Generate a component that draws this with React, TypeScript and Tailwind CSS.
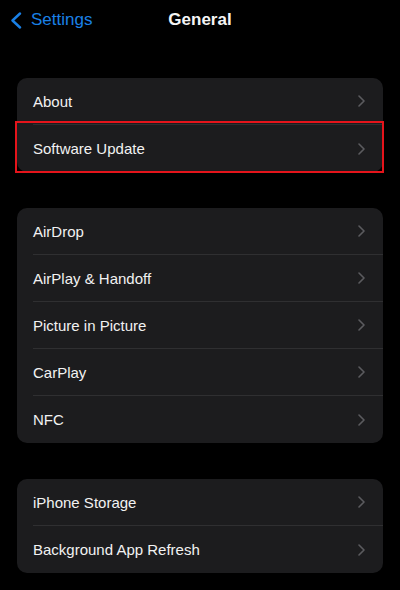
import React from 'react';

const groups: { label: string; highlight?: boolean }[][] = [
  [{ label: 'About' }, { label: 'Software Update', highlight: true }],
  [
    { label: 'AirDrop' },
    { label: 'AirPlay & Handoff' },
    { label: 'Picture in Picture' },
    { label: 'CarPlay' },
    { label: 'NFC' },
  ],
  [{ label: 'iPhone Storage' }, { label: 'Background App Refresh' }],
];

function Chevron() {
  return (
    <svg width="7" height="12" viewBox="0 0 7 12" fill="none" className="shrink-0">
      <path d="M1 1l5 5-5 5" stroke="#5b5b5f" strokeWidth="1.6" strokeLinecap="round" strokeLinejoin="round" />
    </svg>
  );
}

function Row({ label, last, highlight }: { label: string; last: boolean; highlight?: boolean }) {
  return (
    <div className="relative h-[47px] pl-4">
      <div className={`flex h-full items-center pr-[18px] ${last ? '' : 'border-b border-[#2f2f31]'}`}>
        <span className="flex-1 pt-[2px] text-[15px] text-[#f2f2f2]">{label}</span>
        <Chevron />
      </div>
      {highlight && (
        <div className="pointer-events-none absolute -left-[2px] -right-[1px] -top-[4px] -bottom-[1px] border-2 border-[#e5141b]" />
      )}
    </div>
  );
}

export default function App() {
  return (
    <div className="h-[590px] w-[400px] overflow-hidden bg-black" style={{ fontFamily: '"Liberation Sans", Arial, sans-serif' }}>
      <div className="relative flex h-[40px] items-center">
        <div className="flex items-center gap-[9px] pl-[10px] text-[#1a80e6]">
          <svg width="12" height="17" viewBox="0 0 12 17" fill="none">
            <path d="M10 1.5L2.5 8.5l7.5 7" stroke="#1a80e6" strokeWidth="2.4" strokeLinecap="round" strokeLinejoin="round" />
          </svg>
          <span className="text-[17px]">Settings</span>
        </div>
        <div className="absolute inset-x-0 top-0 flex h-[40px] items-center justify-center">
          <span className="text-[17px] font-bold text-[#f5f5f5]">General</span>
        </div>
      </div>
      <div className="flex flex-col gap-[36px] px-[17px] pt-[38px]">
        {groups.map((g, gi) => (
          <div key={gi} className="rounded-[10px] bg-[#1c1c1e]">
            {g.map((r, ri) => (
              <Row key={r.label} label={r.label} last={ri === g.length - 1} highlight={r.highlight} />
            ))}
          </div>
        ))}
      </div>
    </div>
  );
}
